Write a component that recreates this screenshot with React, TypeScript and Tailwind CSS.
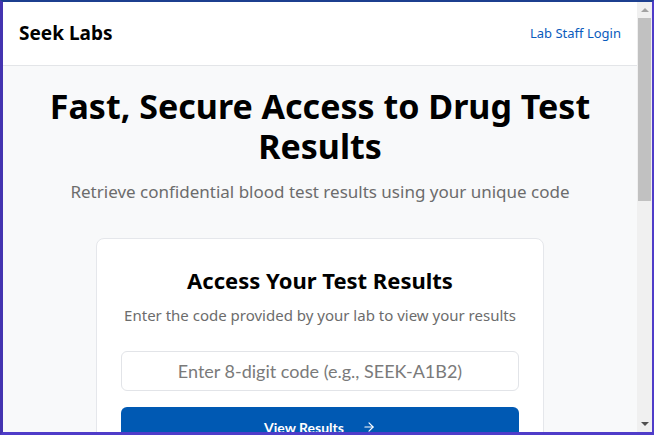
import { ArrowRight } from "lucide-react";

function ScrollBar() {
  return (
    <div className="flex w-[15px] flex-col items-center bg-[#f0f0f0]">
      <div className="flex h-[16px] w-full items-center justify-center">
        <div className="h-0 w-0 border-x-[4px] border-b-[4px] border-x-transparent border-b-[#a3a3a3]" />
      </div>
      <div className="h-[183px] w-[13px] bg-[#c1c1c1]" />
      <div className="flex-1" />
      <div className="flex h-[16px] w-full items-center justify-center">
        <div className="h-0 w-0 border-x-[4px] border-t-[4px] border-x-transparent border-t-[#505050]" />
      </div>
    </div>
  );
}

export default function App() {
  return (
    <div className="flex h-[435px] w-[654px] overflow-hidden border-b-[3px] border-l-[3px] border-r-[2px] border-t-[2px] border-b-[#4f3cc9] border-l-[#4434b0] border-r-[#4f3cc9] border-t-[#1c3f8f] font-['Segoe_UI','Noto_Sans',sans-serif]">
      <div className="flex min-w-0 flex-1 flex-col bg-[#f8f9fa]">
        <header className="flex h-[64px] shrink-0 items-center justify-between border-b border-[#e3e5e8] bg-white px-4">
          <span className="text-[19px] font-bold text-black">Seek Labs</span>
          <a className="text-[13px] text-[#0a5bbd]">Lab Staff Login</a>
        </header>
        <main className="flex flex-col items-center px-4 pt-5">
          <h1 className="text-center text-[34px] font-bold leading-[40px] text-black">
            Fast, Secure Access to Drug Test
            <br />
            Results
          </h1>
          <p className="mt-3 text-[17px] leading-[28px] text-[#6c6c6c]">
            Retrieve confidential blood test results using your unique code
          </p>
          <div className="mt-8 w-full max-w-md rounded-lg border border-[#e5e7eb] bg-white px-6 pt-[25px]">
            <h2 className="text-center text-[22px] font-bold leading-[32px] text-black">
              Access Your Test Results
            </h2>
            <p className="mt-[7px] text-center text-[15px] leading-[24px] text-[#6c6c6c]">
              Enter the code provided by your lab to view your results
            </p>
            <input
              className="mt-6 h-[40px] w-full rounded-md border border-[#e2e4e8] text-center font-['Lato',sans-serif] text-[18px] outline-none placeholder:text-[#7a7a7a]"
              placeholder="Enter 8-digit code (e.g., SEEK-A1B2)"
            />
            <button className="mt-4 flex h-10 w-full items-center justify-center gap-[18px] rounded-md bg-[#0059b3] font-['Lato',sans-serif] text-[14px] font-bold text-white">
              View Results
              <ArrowRight size={14} strokeWidth={2} />
            </button>
          </div>
        </main>
      </div>
      <ScrollBar />
    </div>
  );
}
